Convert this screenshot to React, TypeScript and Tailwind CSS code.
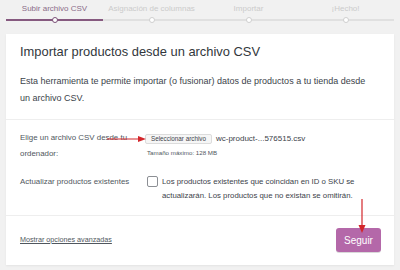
import React from "react";

const steps = ["Subir archivo CSV", "Asignación de columnas", "Importar", "¡Hecho!"];

function Steps() {
  return (
    <div className="grid h-[34px] grid-cols-4 px-[6px] pt-[4px]">
      {steps.map((s, i) => {
        const active = i === 0;
        return (
          <div key={s} className="flex flex-col items-center">
            <span className={`whitespace-nowrap text-[8px] leading-[10px] ${active ? "text-[#8a6c88]" : "text-[#cbcbcb]"}`}>{s}</span>
            <div className="relative mt-[3px] h-[6px] w-full">
              <div
                className={`absolute left-0 right-0 top-1/2 -translate-y-1/2 ${active ? "h-[2px] bg-[#86597f]" : "h-px bg-[#cfcfcf]"}`}
              />
              <div
                className={`absolute left-1/2 top-0 h-[6px] w-[6px] -translate-x-1/2 rounded-full border-[1.5px] bg-white ${active ? "border-[#7a4f76]" : "border-[#cfcfcf]"}`}
              />
            </div>
          </div>
        );
      })}
    </div>
  );
}

export default function App() {
  return (
    <div
      className="h-[270px] w-[400px] overflow-hidden bg-[#f1f1f1] text-[#50575e]"
      style={{ fontFamily: '"Liberation Sans", Arial, sans-serif' }}
    >
      <Steps />
      <div className="mx-[6px] bg-white shadow-[0_1px_2px_rgba(0,0,0,0.06)]">
        <div className="px-[14px] pb-[12px] pt-[9px]">
          <h1 className="text-[12.9px] leading-[18px] text-[#32373c]">Importar productos desde un archivo CSV</h1>
          <p className="mt-[12px] max-w-[352px] text-[9px] leading-[17px] text-[#3c434a]">
            Esta herramienta te permite importar (o fusionar) datos de productos a tu tienda desde un archivo CSV.
          </p>
        </div>
        <div className="border-t border-[#eeeeee] px-[14px] pb-[12px] pt-[10px]">
          <div className="flex">
            <div className="w-[125px] text-[7.9px] leading-[16px] text-[#50575e]">
              Elige un archivo CSV desde tu ordenador:
            </div>
            <div className="relative flex-1">
              <div className="flex items-center gap-[4px] pt-[4px]">
                <span className="rounded-[2px] border border-[#dcdcdc] bg-[#f6f6f6] px-[5px] text-[6.3px] leading-[8px] text-[#3c434a]">
                  Seleccionar archivo
                </span>
                <span className="text-[8px] leading-[10px] text-[#3c434a]">wc-product-...576515.csv</span>
              </div>
              <div className="mt-[5px] pl-[2px] text-[6.2px] leading-[8px] text-[#50575e]">Tamaño máximo: 128 MB</div>
              <svg className="absolute left-[-38px] top-[5px] h-[8px] w-[39px]" viewBox="0 0 39 8">
                <line x1="0" y1="4" x2="33" y2="4" stroke="#d3262b" strokeWidth="1.2" />
                <polygon points="31,1 39,4 31,7" fill="#d3262b" />
              </svg>
            </div>
          </div>
          <div className="mt-[13px] flex">
            <div className="w-[127px] text-[7.9px] leading-[14px] text-[#50575e]">Actualizar productos existentes</div>
            <div className="flex flex-1 gap-[4px]">
              <span className="mt-[1px] h-[11px] w-[11px] shrink-0 rounded-[2px] border border-[#8c8f94] bg-white" />
              <span className="text-[7.8px] leading-[14px] text-[#3c434a]">
                Los productos existentes que coincidan en ID o SKU se actualizarán. Los productos que no existan se omitirán.
              </span>
            </div>
          </div>
        </div>
        <div className="relative flex items-center justify-between border-t border-[#eeeeee] pb-[13px] pl-[14px] pr-[13px] pt-[12px]">
          <a className="text-[7.2px] text-[#50575e] underline">Mostrar opciones avanzadas</a>
          <span className="flex h-[24px] w-[45px] items-center justify-center rounded-[3px] bg-[#b468a9] text-[10px] text-white shadow-[0_1px_0_rgba(0,0,0,0.15)]">
            Seguir
          </span>
          <svg className="absolute right-[27px] top-[-17px] h-[34px] w-[10px]" viewBox="0 0 10 34">
            <line x1="5" y1="0" x2="5" y2="28" stroke="#d3262b" strokeWidth="1.2" />
            <polygon points="1.5,26 5,34 8.5,26" fill="#d3262b" />
          </svg>
        </div>
      </div>
    </div>
  );
}
